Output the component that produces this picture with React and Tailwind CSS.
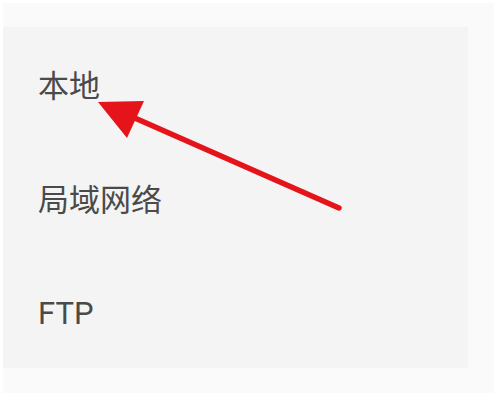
import React from "react";

const items = ["本地", "局域网络", "FTP"];

const App = () => {
  return (
    <div className="relative w-[500px] h-[398px] bg-white overflow-hidden">
      <div className="ml-[3px] mt-[3px] w-[491px] h-[390px] bg-[#fafafa] pt-[24px]">
        <div className="w-[465px] h-[341px] bg-[#f4f4f4] flex flex-col">
          {items.map((item) => (
            <div
              key={item}
              className="h-[113.7px] flex items-center pl-[35px] pt-[7px] text-[31px] text-[#4a4a4a]"
              style={{ fontFamily: 'Roboto, "Noto Sans CJK SC", sans-serif' }}
            >
              {item}
            </div>
          ))}
        </div>
      </div>

      {/* red arrow drawn over the list */}
      <svg
        className="absolute left-0 top-0 pointer-events-none"
        width="500"
        height="398"
        viewBox="0 0 500 398"
      >
        <line
          x1="339"
          y1="208"
          x2="128"
          y2="115"
          stroke="#e5141b"
          strokeWidth="5.5"
          strokeLinecap="round"
        />
        <polygon points="98,102 144,101 127,138" fill="#e5141b" />
      </svg>
    </div>
  );
};

export default App;
